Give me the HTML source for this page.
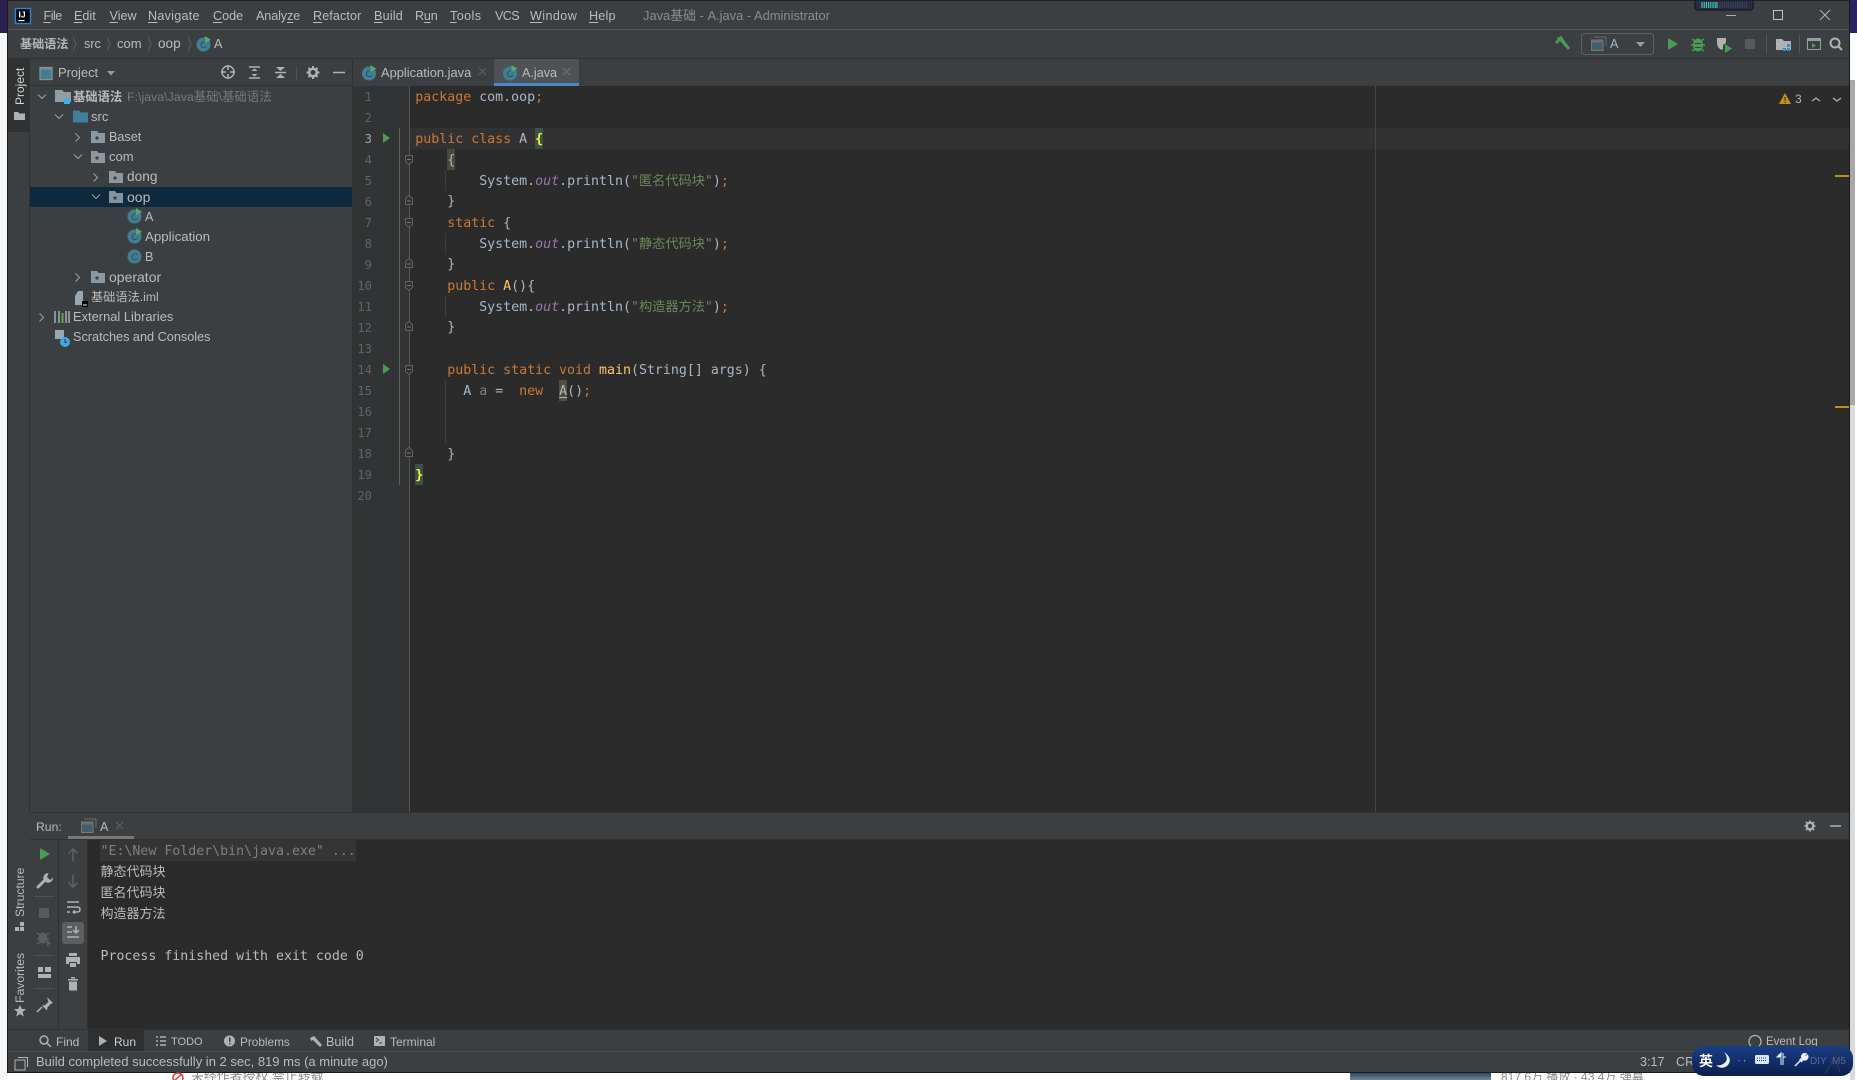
<!DOCTYPE html>
<html><head><meta charset="utf-8"><style>
html,body{margin:0;padding:0;width:1857px;height:1080px;overflow:hidden;background:#fff}
body{position:relative;font-family:"Liberation Sans","Noto Sans CJK SC",sans-serif;font-size:12.6px;color:#BBBBBB}
.b{position:absolute}
.t{position:absolute;white-space:nowrap;line-height:20px;height:20px}
.l{position:absolute;left:415.3px;margin-top:1px;height:21px;line-height:21px;white-space:pre;font-family:"DejaVu Sans Mono","Noto Sans CJK SC",monospace;font-size:13.28px;color:#A9B7C6}
.n{position:absolute;left:353px;margin-top:1px;width:19px;text-align:right;height:21px;line-height:21px;font-family:"DejaVu Sans Mono",monospace;font-size:12.2px;color:#606366}
.k{color:#CC7832}.s{color:#6A8759}.o{color:#9876AA;font-style:italic}.y{color:#FFC66D}
.c{font-size:13.2px;font-family:"Noto Sans CJK SC",sans-serif}
.m{position:absolute;white-space:nowrap;font-size:13.25px;line-height:21px;height:21px;color:#BBBBBB;font-family:"DejaVu Sans Mono","Noto Sans CJK SC",monospace}
.r{font-size:13px;font-family:"Noto Sans CJK SC",sans-serif}
u{text-underline-offset:2px}
svg{position:absolute;left:0;top:0}
</style></head><body>
<!-- background behind window -->
<div class="b" style="left:0;top:0;width:7px;height:33px;background:#2A2150"></div>
<div class="b" style="left:0;top:33px;width:7px;height:1047px;background:#F6F6F6"></div>
<div class="b" style="left:1850px;top:0;width:7px;height:33px;background:#2A2560"></div>
<div class="b" style="left:1850px;top:80px;width:5px;height:325px;background:#A8A8A8"></div>
<div class="b" style="left:1850px;top:405px;width:5px;height:675px;background:#DADADA"></div>
<div class="b" style="left:1350px;top:1073px;width:141px;height:7px;background:linear-gradient(#2E4A60,#6F8798)"></div>
<div class="t" style="left:191px;top:1067px;color:#8a8a8a;font-size:12.9px">未经作者授权 禁止转载</div>
<div class="t" style="left:1501px;top:1067px;color:#8a8a8a;font-size:12px">817.6万 播放 · 43.4万 弹幕</div>
<div class="b" style="left:7px;top:0;width:1843px;height:1073px;background:#3C3F41;border-right:1px solid #1a1a1a;border-bottom:1px solid #1a1a1a;border-left:1px solid #1a1a1a;box-sizing:border-box;border-top:1px solid #222"></div>

<!-- chrome rules -->
<div class="b" style="left:8px;top:29px;width:1841px;height:1px;background:#555"></div>
<div class="b" style="left:8px;top:58px;width:1841px;height:1px;background:#323232"></div>
<div class="b" style="left:8px;top:59px;width:21px;height:73px;background:#2F3133"></div>
<div class="b" style="left:29px;top:59px;width:1px;height:753px;background:#323232"></div>
<div class="b" style="left:30px;top:85px;width:323px;height:1px;background:#323232"></div>
<div class="b" style="left:352px;top:59px;width:1px;height:753px;background:#323232"></div>
<div class="b" style="left:494px;top:59px;width:85px;height:27px;background:#4E5254"></div>
<div class="b" style="left:494px;top:83px;width:85px;height:3px;background:#4A88C7"></div>
<div class="b" style="left:30px;top:187px;width:322px;height:20px;background:#0D293E"></div>

<!-- editor -->
<div class="b" style="left:353px;top:86px;width:1496px;height:726px;background:#2B2B2B"></div>
<div class="b" style="left:353px;top:86px;width:57px;height:726px;background:#313335"></div>
<div class="b" style="left:410px;top:128px;width:1439px;height:21px;background:#323232"></div>
<div class="b" style="left:353px;top:128px;width:57px;height:21px;background:#313335"></div>
<div class="b" style="left:1375px;top:86px;width:1px;height:726px;background:#444"></div>
<div class="b" style="left:409px;top:86px;width:1px;height:726px;background:#555"></div>
<div class="b" style="left:399px;top:128px;width:1px;height:357px;background:#52665E"></div>
<div class="b" style="left:445px;top:170px;width:1px;height:21px;background:#3c3c3c"></div>
<div class="b" style="left:445px;top:233px;width:1px;height:21px;background:#3c3c3c"></div>
<div class="b" style="left:445px;top:296px;width:1px;height:21px;background:#3c3c3c"></div>
<div class="b" style="left:445px;top:380px;width:1px;height:63px;background:#3c3c3c"></div>
<div class="b" style="left:1835px;top:175px;width:14px;height:2px;background:#BE9117"></div>
<div class="b" style="left:1835px;top:406px;width:14px;height:2px;background:#BE9117"></div>

<!-- highlights -->
<div class="b" style="left:535px;top:128px;width:8px;height:21px;background:#3B514D"></div>
<div class="b" style="left:447px;top:149px;width:8px;height:21px;background:#4A4A38"></div>
<div class="b" style="left:415px;top:464px;width:8px;height:21px;background:#3B514D"></div>
<div class="b" style="left:559px;top:380px;width:8px;height:21px;background:#52503A"></div>

<!-- line numbers -->
<div class="n" style="top:86px">1</div><div class="n" style="top:107px">2</div><div class="n" style="top:128px;color:#A4A3A3">3</div><div class="n" style="top:149px">4</div><div class="n" style="top:170px">5</div><div class="n" style="top:191px">6</div><div class="n" style="top:212px">7</div><div class="n" style="top:233px">8</div><div class="n" style="top:254px">9</div><div class="n" style="top:275px">10</div><div class="n" style="top:296px">11</div><div class="n" style="top:317px">12</div><div class="n" style="top:338px">13</div><div class="n" style="top:359px">14</div><div class="n" style="top:380px">15</div><div class="n" style="top:401px">16</div><div class="n" style="top:422px">17</div><div class="n" style="top:443px">18</div><div class="n" style="top:464px">19</div><div class="n" style="top:485px">20</div>

<!-- code -->
<div class="l" style="top:86px"><span class="k">package</span> com.oop<span class="k">;</span></div>
<div class="l" style="top:128px"><span class="k">public class</span> A <span style="color:#FFEF28;font-weight:bold">{</span></div>
<div class="l" style="top:149px">    {</div>
<div class="l" style="top:168px">        System.<span class="o">out</span>.println(<span class="s">"<span class="c">匿名代码块</span>"</span>)<span class="k">;</span></div>
<div class="l" style="top:190px">    }</div>
<div class="l" style="top:212px">    <span class="k">static</span> {</div>
<div class="l" style="top:231px">        System.<span class="o">out</span>.println(<span class="s">"<span class="c">静态代码块</span>"</span>)<span class="k">;</span></div>
<div class="l" style="top:253px">    }</div>
<div class="l" style="top:275px">    <span class="k">public</span> <span class="y">A</span>(){</div>
<div class="l" style="top:294px">        System.<span class="o">out</span>.println(<span class="s">"<span class="c">构造器方法</span>"</span>)<span class="k">;</span></div>
<div class="l" style="top:316px">    }</div>
<div class="l" style="top:359px">    <span class="k">public static void</span> <span class="y">main</span>(String[] args) {</div>
<div class="l" style="top:380px">      A <span style="color:#808080">a</span> =  <span class="k">new</span>  <u>A</u>()<span class="k">;</span></div>
<div class="l" style="top:443px">    }</div>
<div class="l" style="top:464px"><span style="color:#FFEF28;font-weight:bold">}</span></div>

<!-- menu -->
<div class="t" style="left:43.5px;top:6px;letter-spacing:-.5px"><u>F</u>ile</div>
<div class="t" style="left:74px;top:6px"><u>E</u>dit</div>
<div class="t" style="left:109.5px;top:6px"><u>V</u>iew</div>
<div class="t" style="left:148px;top:6px;letter-spacing:.25px"><u>N</u>avigate</div>
<div class="t" style="left:213px;top:6px"><u>C</u>ode</div>
<div class="t" style="left:256px;top:6px;letter-spacing:-.1px">Analy<u>z</u>e</div>
<div class="t" style="left:313px;top:6px;letter-spacing:.1px"><u>R</u>efactor</div>
<div class="t" style="left:374px;top:6px;letter-spacing:.2px"><u>B</u>uild</div>
<div class="t" style="left:415px;top:6px;letter-spacing:-.2px">R<u>u</u>n</div>
<div class="t" style="left:450px;top:6px;letter-spacing:.4px"><u>T</u>ools</div>
<div class="t" style="left:495px;top:6px;letter-spacing:-.6px">VCS</div>
<div class="t" style="left:530px;top:6px;letter-spacing:.4px"><u>W</u>indow</div>
<div class="t" style="left:589px;top:6px;letter-spacing:.2px"><u>H</u>elp</div>
<div class="t" style="left:643px;top:6px;color:#8C8C8C;font-size:12.9px">Java基础 - A.java - Administrator</div>

<!-- breadcrumb -->
<div class="t" style="left:20px;top:34px;font-weight:bold;color:#B5B5B5;font-size:12.1px">基础语法</div>
<div class="t" style="left:84px;top:34px">src</div>
<div class="t" style="left:117px;top:34px;font-size:13px">com</div>
<div class="t" style="left:158px;top:34px;font-size:13.6px">oop</div>
<div class="t" style="left:214px;top:34px">A</div>
<div class="t" style="left:1610px;top:34px;color:#A9B7C6">A</div>

<!-- project panel -->
<div class="t" style="left:58px;top:63px;font-size:12.9px">Project</div>
<div class="t" style="left:73px;top:87px;font-weight:bold;font-size:12.3px">基础语法</div>
<div class="t" style="left:127px;top:87px;color:#787878;font-size:12.4px">F:\java\Java基础\基础语法</div>
<div class="t" style="left:91px;top:107px;font-size:13px">src</div>
<div class="t" style="left:109px;top:127px">Baset</div>
<div class="t" style="left:109px;top:147px;font-size:13px">com</div>
<div class="t" style="left:127px;top:167px;font-size:13.7px">dong</div>
<div class="t" style="left:127px;top:187px;font-size:14px">oop</div>
<div class="t" style="left:145px;top:207px">A</div>
<div class="t" style="left:145px;top:227px;font-size:13.3px">Application</div>
<div class="t" style="left:145px;top:247px">B</div>
<div class="t" style="left:109px;top:267px;font-size:14px">operator</div>
<div class="t" style="left:91px;top:287px;font-size:12.2px">基础语法.iml</div>
<div class="t" style="left:73px;top:307px;font-size:12.9px">External Libraries</div>
<div class="t" style="left:73px;top:327px;font-size:12.7px">Scratches and Consoles</div>

<!-- tabs -->
<div class="t" style="left:381px;top:63px;color:#BBBBBB;font-size:12.9px">Application.java</div>
<div class="t" style="left:522px;top:63px;color:#BBBBBB">A.java</div>

<!-- warning -->
<div class="t" style="left:1795px;top:89px;color:#A9B7C6;font-size:12px">3</div>

<!-- run panel -->
<div class="b" style="left:30px;top:812px;width:1819px;height:1px;background:#323232"></div>
<div class="b" style="left:30px;top:839px;width:1819px;height:1px;background:#323232"></div>
<div class="b" style="left:68px;top:836px;width:66px;height:3px;background:#787878"></div>
<div class="t" style="left:36px;top:817px;font-size:12.2px">Run:</div>
<div class="t" style="left:100px;top:817px">A</div>
<div class="b" style="left:88px;top:840px;width:1761px;height:189px;background:#2B2B2B"></div>
<div class="b" style="left:100px;top:840px;width:256px;height:21px;background:#353535"></div>
<div class="b" style="left:58px;top:840px;width:1px;height:189px;background:#323232"></div>
<div class="b" style="left:87px;top:840px;width:1px;height:189px;background:#323232"></div>
<div class="b" style="left:62px;top:922px;width:22px;height:22px;border-radius:3px;background:#5B5F61"></div>
<div class="m" style="left:100.5px;top:841px;color:#808080">"E:\New Folder\bin\java.exe" ...</div>
<div class="m r" style="left:100.5px;top:860px">静态代码块</div>
<div class="m r" style="left:100.5px;top:881px">匿名代码块</div>
<div class="m r" style="left:100.5px;top:902px">构造器方法</div>
<div class="m" style="left:100.5px;top:946px">Process finished with exit code 0</div>

<!-- bottom bars -->
<div class="b" style="left:8px;top:1029px;width:1841px;height:1px;background:#323232"></div>
<div class="b" style="left:8px;top:1051px;width:1841px;height:1px;background:#4a4d4f"></div>
<div class="b" style="left:88px;top:1030px;width:56px;height:21px;background:#2D2F30"></div>
<div class="t" style="left:56px;top:1032px;font-size:12px">Find</div>
<div class="t" style="left:114px;top:1032px;color:#D0D0D0;font-size:12px">Run</div>
<div class="t" style="left:171px;top:1032px;font-size:11px">TODO</div>
<div class="t" style="left:240px;top:1032px;font-size:11.8px">Problems</div>
<div class="t" style="left:326px;top:1032px">Build</div>
<div class="t" style="left:390px;top:1032px;font-size:12px">Terminal</div>
<div class="t" style="left:36px;top:1052px;font-size:13px">Build completed successfully in 2 sec, 819 ms (a minute ago)</div>
<div class="t" style="left:1640px;top:1052px">3:17</div>
<div class="t" style="left:1676px;top:1052px">CRLF</div>
<div class="t" style="left:1766px;top:1032px;font-size:11.5px">Event Log</div>

<!-- IME -->
<div class="b" style="left:1692px;top:1046px;width:161px;height:30px;border-radius:12px;background:linear-gradient(#1A3E86,#0A1E4C)"></div>
<div class="t" style="left:1699px;top:1051px;color:#fff;font-weight:bold;font-size:14px">英</div>

<svg width="1857" height="1080" viewBox="0 0 1857 1080" font-family="Liberation Sans,sans-serif">
<defs>
<symbol id="fo" viewBox="0 0 14 12" overflow="visible"><path d="M0 0h6l1.5 2H14v10H0z" fill="#9AA7B0" opacity=".85"/><circle cx="6" cy="7" r="1.6" fill="#3C3F41"/></symbol>
<symbol id="cl" viewBox="0 0 16 16" overflow="visible"><circle cx="7.5" cy="8.5" r="7" fill="#3F7F92"/><text x="7.5" y="12" font-size="9.5" text-anchor="middle" fill="#2B4A56">C</text></symbol>
<symbol id="cr" viewBox="0 0 16 16" overflow="visible"><circle cx="7.5" cy="8.5" r="7" fill="#3F7F92"/><text x="7.5" y="12" font-size="9.5" text-anchor="middle" fill="#2B4A56">C</text><path d="M9 0l6 3.7-6 3.7z" fill="#59A869"/></symbol>
<symbol id="win" viewBox="0 0 15 14" overflow="visible"><path d="M3 0h12v9" fill="none" stroke="#6E6E6E"/><rect x=".5" y="3" width="11.5" height="10.5" fill="#3E5F6B" stroke="#7a7a7a"/><rect x=".5" y="3" width="11.5" height="2.5" fill="#6E6E6E"/></symbol>
</defs>

<!-- logo -->
<rect x="15.5" y="8.5" width="15" height="15" fill="#000" stroke="#1E88E5" stroke-width="1.4"/>
<text x="18.5" y="17.5" font-size="8.5" font-weight="bold" fill="#fff">IJ</text>
<rect x="18.5" y="20" width="6" height="1.2" fill="#fff"/>

<!-- window controls & widget -->
<path d="M1695 0h58v7q0 3-3 3h-52q-3 0-3-3z" fill="#262D45" stroke="#111"/>
<path d="M1702 2v6M1704.200 2v6M1706.400 2v6M1708.600 2v6M1710.800 2v6M1713 2v6M1715.200 2v6M1717 2v6" stroke="#4FE0B0"/>
<path d="M1720 2v6M1722.200 2v6M1724.400 2v6M1726.600 2v6M1728.800 2v6M1731 2v6M1733.200 2v6M1735.400 2v6M1737.600 2v6M1739.800 2v6M1742 2v6M1744.200 2v6M1746.400 2v6" stroke="#3C4258"/>
<path d="M1726 15.500h10" stroke="#B0B0B0"/>
<rect x="1773.500" y="10.500" width="9" height="9" fill="none" stroke="#C0C0C0"/>
<path d="M1820 10l10 10M1830 10l-10 10" stroke="#B0B0B0"/>

<!-- breadcrumb arrows + icon -->
<path d="M73 37l3 7-3 7M107 37l3 7-3 7M148 37l3 7-3 7M188 37l3 7-3 7" fill="none" stroke="#5a5d5f"/>
<use href="#cr" x="196" y="36" width="16" height="16"/>

<!-- toolbar right -->
<g fill="#499C54"><path d="M1557 38l4-2 9 12-2 2-8-9-2 1z"/><path d="M1555 42l6-6 2 2-6 6z"/></g>
<rect x="1581.500" y="33.500" width="72" height="21" rx="3" fill="none" stroke="#5E6163"/>
<use href="#win" x="1591" y="37" width="15" height="14"/>
<path d="M1636 42h9l-4.500 5z" fill="#9A9A9A"/>
<path d="M1668 38l10 6-10 6z" fill="#499C54"/>
<g fill="#499C54"><ellipse cx="1698" cy="45" rx="5" ry="6.500"/><path d="M1692 39l3 2M1704 39l-3 2M1691 45h14M1692 51l3-2M1704 51l-3-2" stroke="#499C54" stroke-width="1.500"/><rect x="1695" y="43" width="6" height="1" fill="#3C3F41"/><rect x="1695" y="47" width="6" height="1" fill="#3C3F41"/></g>
<path d="M1717 38h9v5l-3 2v4l-1 1q-5-2-5-7z" fill="#AFB1B3"/>
<path d="M1725 44l7 4.500-7 4.500z" fill="#499C54"/>
<rect x="1745" y="39" width="10" height="10" fill="#5A5A5A"/>
<rect x="1766" y="34" width="1" height="20" fill="#555"/>
<path d="M1776 39h6l2 2h7v9h-15z" fill="#AFB1B3"/>
<path d="M1787 44h3v3h-3zM1783 48h3v3h-3zM1787 48h3v3h-3z" fill="#3592C4"/>
<rect x="1799" y="34" width="1" height="20" fill="#555"/>
<rect x="1807.500" y="38.500" width="13" height="11" fill="none" stroke="#9A9D9F"/><rect x="1807" y="38" width="14" height="3" fill="#9A9D9F"/><path d="M1812 43l4 2.500-4 2.500z" fill="#499C54"/>
<circle cx="1835" cy="43" r="4.500" fill="none" stroke="#AFB1B3" stroke-width="2"/><path d="M1838 46l4 4" stroke="#AFB1B3" stroke-width="2"/>

<!-- warning -->
<path d="M1785 93l6 11h-12z" fill="#BE9117"/><rect x="1784.500" y="97" width="1" height="4" fill="#222"/><rect x="1784.500" y="102" width="1" height="1" fill="#222"/>
<path d="M1812 101l4-3 4 3M1833 98l4 3 4-3" fill="none" stroke="#AFB1B3" stroke-width="1.300"/>

<!-- project strip -->
<text transform="translate(24,105) rotate(-90)" font-size="12" fill="#D0D0D0">Project</text>
<path d="M14 112h4l1.500 1.500H25V120H14z" fill="#AFB1B3"/>
<text transform="translate(24,917) rotate(-90)" font-size="12.2" fill="#BBBBBB">Structure</text>
<path d="M15 927h4v4h-4zM20 927h4v4h-4zM20 922h4v4h-4z" fill="#AFB1B3"/>
<text transform="translate(24,1003) rotate(-90)" font-size="12.2" fill="#BBBBBB">Favorites</text>
<path d="M20 1005l1.800 4h4.200l-3.400 3 1.200 4.500-3.800-2.500-3.800 2.500 1.200-4.500-3.400-3h4.200z" fill="#AFB1B3"/>

<!-- project header -->
<rect x="40" y="67.500" width="12" height="12" fill="#3E7E92" stroke="#8a8d8f" stroke-width="1.300"/>
<rect x="40" y="67" width="12" height="2.500" fill="#8a8d8f"/>
<path d="M107 71h8l-4 4.500z" fill="#9A9A9A"/>
<circle cx="228" cy="72" r="6" fill="none" stroke="#AFB1B3" stroke-width="1.500"/><path d="M228 65v5M228 74v5M221 72h5M230 72h5" stroke="#AFB1B3" stroke-width="1.500"/>
<path d="M249 67h11M249 78h11" stroke="#AFB1B3" stroke-width="1.500"/><path d="M251.500 71l3-2.500 3 2.500M251.500 74l3 2.500 3-2.500" fill="#AFB1B3"/>
<path d="M275 72.500h11" stroke="#AFB1B3" stroke-width="1.500"/><path d="M276 67h9l-4.500 4zM276 78h9l-4.500-4z" fill="#AFB1B3"/>
<rect x="296" y="66" width="1" height="14" fill="#515151"/>
<circle cx="313" cy="72.500" r="3.800" fill="none" stroke="#AFB1B3" stroke-width="2.500"/><path d="M313 66v2.500M313 76.500v2.500M306.500 72.500h2.500M317 72.500h2.500M308.500 68l1.800 1.800M315.700 75.200l1.800 1.800M308.500 77l1.800-1.800M315.700 69.800l1.800-1.800" stroke="#AFB1B3" stroke-width="2"/>
<path d="M333 72.500h12" stroke="#AFB1B3" stroke-width="1.500"/>

<!-- tab icons -->
<use href="#cr" x="361.500" y="65" width="16" height="16"/>
<path d="M479 68l7 7M486 68l-7 7" stroke="#5F6264"/>
<use href="#cr" x="502.500" y="65" width="16" height="16"/>
<path d="M563 68l7 7M570 68l-7 7" stroke="#6F7274"/>

<!-- tree arrows -->
<g fill="none" stroke="#9A9D9F" stroke-width="1.100">
<path d="M38 94.500l4 4 4-4M55 114.500l4 4 4-4M74 154.500l4 4 4-4M92 194.500l4 4 4-4"/>
<path d="M75.500 133.500l4 4-4 4M93.500 173.500l4 4-4 4M75.500 273.500l4 4-4 4M39.500 313.500l4 4-4 4"/>
</g>
<!-- tree icons -->
<path d="M55 90h7l2 2h7v10H55z" fill="#9AA7B0" opacity=".9"/><rect x="64" y="98" width="6" height="6" fill="#3FB1E5"/>
<path d="M73 110.500h6l2 2h7v10H73z" fill="#3F7F9C"/>
<use href="#fo" x="91" y="131" width="14" height="12"/>
<use href="#fo" x="91" y="151" width="14" height="12"/>
<use href="#fo" x="109" y="171" width="14" height="12"/>
<use href="#fo" x="109" y="191" width="14" height="12"/>
<use href="#cr" x="127" y="208" width="16" height="16"/>
<use href="#cr" x="127" y="228" width="16" height="16"/>
<use href="#cl" x="127" y="248" width="16" height="16"/>
<use href="#fo" x="91" y="271" width="14" height="12"/>
<path d="M78 291h5v14h-8v-9z" fill="#9AA7B0"/><rect x="82" y="301" width="6" height="6" fill="#000"/><rect x="83" y="304.500" width="4" height="1" fill="#fff"/>
<path d="M55 311v12M59 311v12M66 311v12M69 311v12" stroke="#9AA7B0" stroke-width="1.600"/><path d="M62.500 313v10" stroke="#62B543" stroke-width="1.800"/>
<path d="M55 330h9v9h-9z" fill="#9AA7B0"/><circle cx="65" cy="342" r="5" fill="#3FA9E0"/><path d="M65 339v3.500h2" stroke="#1b3a4a" fill="none"/>

<!-- gutter -->
<path d="M383 133l7 5-7 5zM383 364l7 5-7 5z" fill="#499C54"/>
<g fill="#2F3133" stroke="#5E6163">
<path d="M405.500 155.500h7v6l-3.500 3-3.500-3zM405.500 218.500h7v6l-3.500 3-3.500-3zM405.500 281.500h7v6l-3.500 3-3.500-3zM405.500 365.500h7v6l-3.500 3-3.500-3z"/>
<path d="M405.500 204.500v-6l3.500-3 3.500 3v6zM405.500 267.500v-6l3.500-3 3.500 3v6zM405.500 330.500v-6l3.500-3 3.500 3v6zM405.500 456.500v-6l3.500-3 3.500 3v6z"/>
</g>
<path d="M407 159.500h4M407 201h4M407 222.500h4M407 264h4M407 285.500h4M407 327h4M407 369.500h4M407 453h4" stroke="#7a7d7f"/>

<!-- run panel tab -->
<use href="#win" x="81" y="819" width="15" height="14"/>
<path d="M116 822l7 7M123 822l-7 7" stroke="#5F6264"/>
<circle cx="1810" cy="826" r="3.300" fill="none" stroke="#AFB1B3" stroke-width="2.200"/><path d="M1810 820.500v2M1810 829.500v2M1804.500 826h2M1813.500 826h2M1806 822l1.500 1.500M1812.500 828.500l1.500 1.500M1806 830l1.500-1.500M1812.500 823.500l1.500-1.500" stroke="#AFB1B3" stroke-width="1.800"/>
<path d="M1830 826h11" stroke="#AFB1B3" stroke-width="1.500"/>

<!-- run toolbar col1 -->
<path d="M40 848l10 6-10 6z" fill="#499C54"/>
<path d="M38 887l8-8" stroke="#AFB1B3" stroke-width="3" stroke-linecap="round"/>
<path d="M48.500 873a5 5 0 0 0-5 6.500l3 3a5 5 0 0 0 6.500-5l-3 2.500-3-3z" fill="#AFB1B3"/>
<rect x="34" y="896" width="20" height="1" fill="#515151"/>
<rect x="39" y="908" width="10" height="10" fill="#5A5A5A"/>
<ellipse cx="43" cy="938" rx="4.500" ry="5.500" fill="#5A5D5F"/><path d="M37 933l3 2M49 933l-3 2M37 939h12M37 944l3-2" stroke="#5A5D5F" stroke-width="1.500"/><path d="M47 940l4 3-4 3z" fill="#5A5D5F"/>
<rect x="34" y="955" width="20" height="1" fill="#515151"/>
<path d="M38 967h5v5h-5zM45 967h6v5h-6zM38 974h13v4H38z" fill="#AFB1B3"/>
<rect x="34" y="988" width="20" height="1" fill="#515151"/>
<path d="M47 997l6 6-2.500 1-3 3.500-.5 3-5-5 3-.5 3.500-3z" fill="#AFB1B3"/><path d="M42 1007l-5 5" stroke="#AFB1B3" stroke-width="1.500"/>

<!-- col2 -->
<path d="M73 849v12M68.500 853.500l4.500-4.500 4.500 4.500M73 875v12M68.500 882.500l4.500 4.500 4.500-4.500" fill="none" stroke="#5F6264" stroke-width="1.500"/>
<path d="M67 902h12M67 907h10q3 0 3 2.500t-3 2.500h-4M67 912h3" fill="none" stroke="#AFB1B3" stroke-width="1.500"/><path d="M75 909.500v5l-3-2.500z" fill="#AFB1B3"/>
<path d="M67 927h5M67 932h5M67 937h12" stroke="#AFB1B3" stroke-width="1.500"/><path d="M76 926v6M73 930l3 3 3-3" fill="none" stroke="#AFB1B3" stroke-width="1.500"/>
<path d="M69 953h8v3h-8zM66 957h14v7h-3v-2h-8v2h-3zM70 963h6v4h-6z" fill="#AFB1B3"/>
<path d="M68 979h10v1.500H68zM71 977h4v1.500h-4zM69 981.500h8v9h-8z" fill="#AFB1B3"/>

<!-- bottom icons -->
<circle cx="44" cy="1040" r="4" fill="none" stroke="#AFB1B3" stroke-width="1.500"/><path d="M47 1043l4 4" stroke="#AFB1B3" stroke-width="1.500"/>
<path d="M99 1036l8 5-8 5z" fill="#AFB1B3"/>
<path d="M156 1037h2M156 1041h2M156 1045h2M160 1037h6M160 1041h6M160 1045h6" stroke="#AFB1B3" stroke-width="1.500"/>
<circle cx="229.500" cy="1041" r="5.500" fill="#AFB1B3"/><rect x="229" y="1037.500" width="1.500" height="4.500" fill="#3C3F41"/><rect x="229" y="1043" width="1.500" height="1.500" fill="#3C3F41"/>
<path d="M310 1038l4-2 8 9-2 2-7-7-2 1z" fill="#AFB1B3"/>
<rect x="374" y="1036" width="11" height="10" fill="#AFB1B3"/><path d="M376 1038l2.500 2-2.500 2M379 1043h3" stroke="#3C3F41" fill="none"/>
<rect x="15" y="1060" width="10" height="10" fill="none" stroke="#AFB1B3"/><path d="M18 1057.500h9.500v9.500" fill="none" stroke="#AFB1B3"/>
<path d="M1751 1046a6 6 0 1 1 8 0" fill="none" stroke="#AFB1B3" stroke-width="1.300"/>

<!-- IME icons -->
<path d="M1724 1052q6 8-1 12-3 2-7 1 5 5 11 1 7-7-3-14z" fill="#E8F0FF"/>
<path d="M1739 1060v1M1745 1060l-.5 1.500" stroke="#9fb4d8"/>
<rect x="1755" y="1055" width="14" height="9" rx="1.500" fill="#D8E8FF"/><path d="M1757 1058h10M1757 1060.500h10" stroke="#1B3A78" stroke-dasharray="1 1"/>
<path d="M1781 1053v4h-4zM1781 1058v7M1783 1053v12M1783 1057h3" fill="#E8F0FF" stroke="#E8F0FF"/>
<path d="M1795 1066l6-6M1806 1054a3 3 0 0 0-4 4l-2 2 1.500 1.500 2-2a3 3 0 0 0 4-4l-2 1.500-1.500-1.500z" fill="#E8F0FF" stroke="#E8F0FF" stroke-width="1.500"/>
<path d="M1825 1074l14-24M1832 1050l8 22" stroke="#2B3550" stroke-width="1.500"/>
<text x="1810" y="1064" font-size="10" fill="#5A6A90">DIY</text>
<text x="1832" y="1064" font-size="10" fill="#5A6A90">M5</text>
<!-- bottom red icon -->
<circle cx="178" cy="1078" r="5" fill="none" stroke="#E04040" stroke-width="1.500"/><path d="M174 1081l8-7" stroke="#E04040" stroke-width="1.500"/>
</svg>
</body></html>
